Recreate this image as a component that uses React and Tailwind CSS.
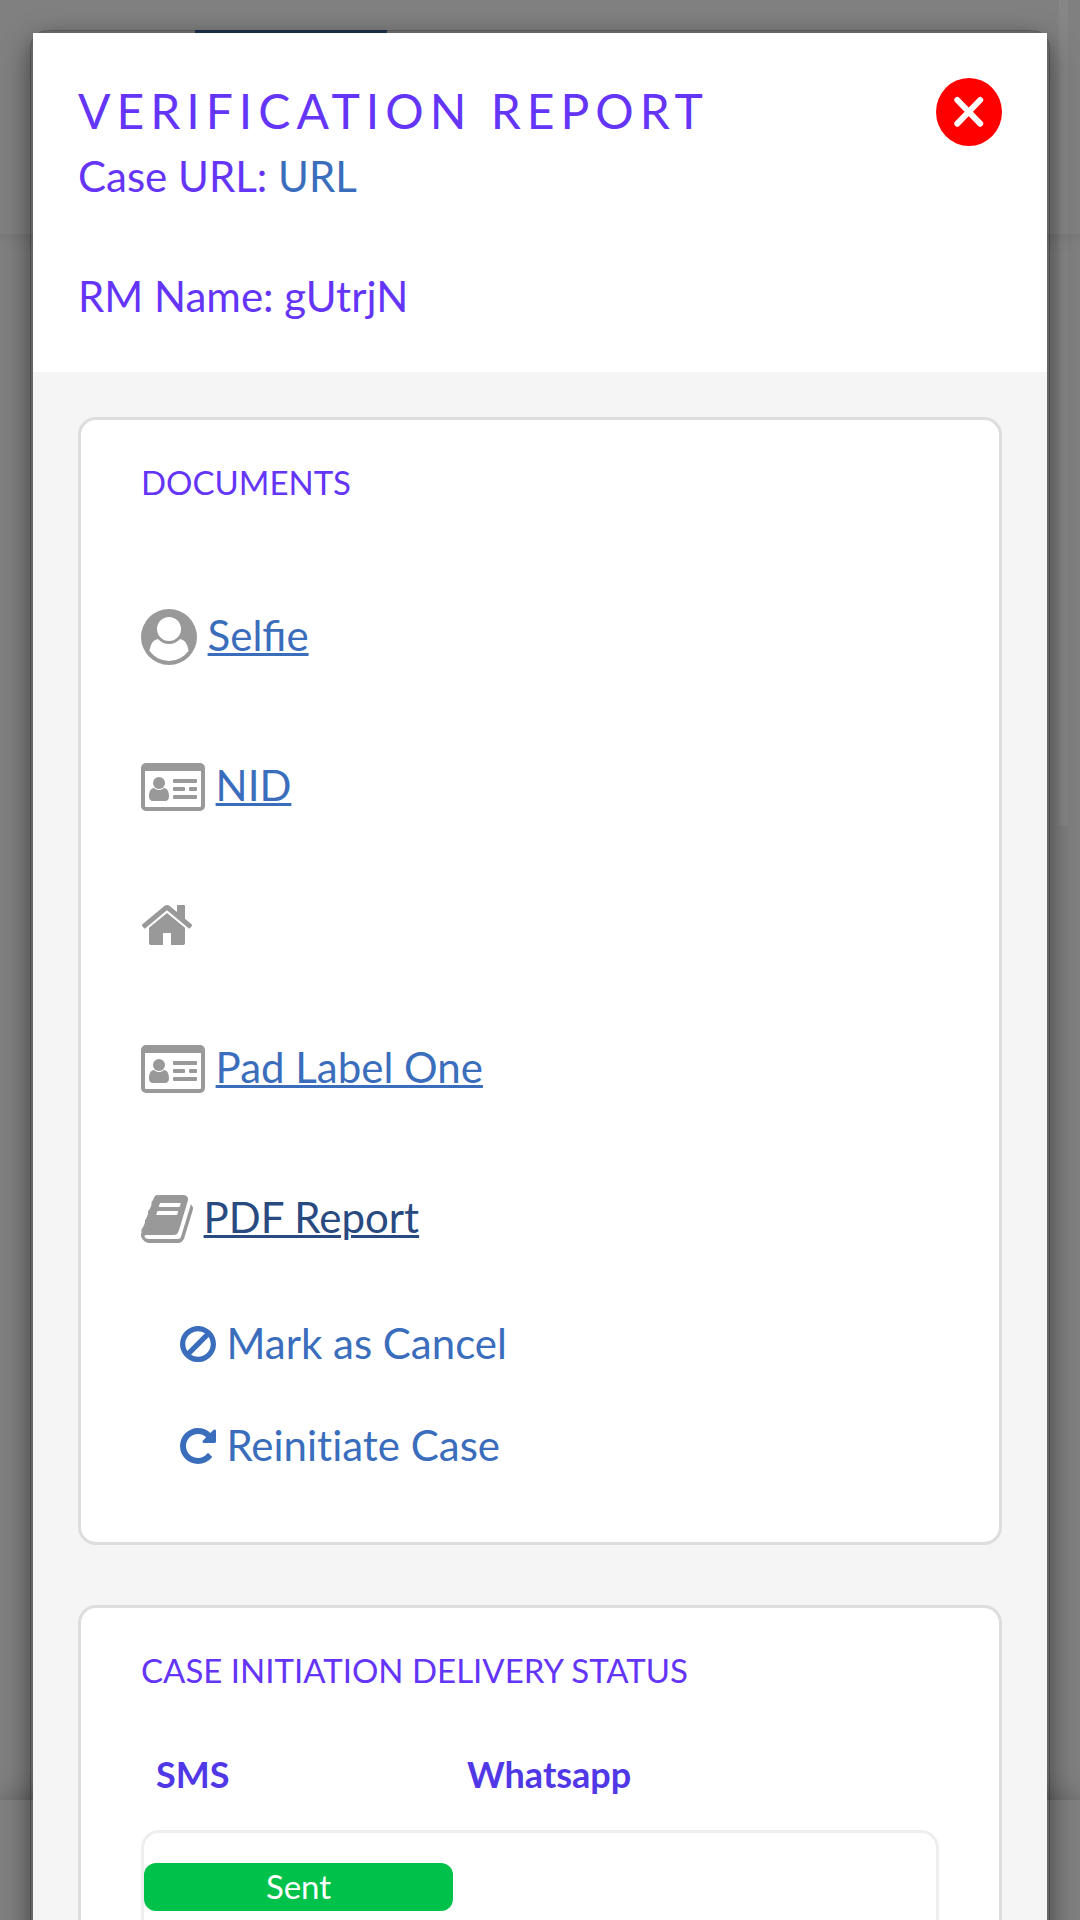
const PATHS = {
  user: "M1523 1339q-22-155-87.5-257.5t-184.5-118.5q-67 74-159.5 115.5t-195.5 41.5-195.5-41.5-159.5-115.5q-119 16-184.5 118.5t-87.5 257.5q106 150 271 237.5t356 87.5 356-87.5 271-237.5zm-243-699q0-159-112.5-271.5t-271.5-112.5-271.5 112.5-112.5 271.5 112.5 271.5 271.5 112.5 271.5-112.5 112.5-271.5zm512 256q0 182-71 347.5t-190.5 286-285.5 191.5-349 71-349-71-285.5-191.5-190.5-286-71-347.5 71-348 191-286 286-191 348-71 348 71 286 191 191 286 71 348z",
  home: "M1472 992v480q0 26-19 45t-45 19h-384v-384h-256v384h-384q-26 0-45-19t-19-45v-480q0-1 .5-3t.5-3l575-474 575 474q1 2 1 6zm223-69l-62 74q-8 9-21 11h-3q-13 0-21-7l-692-577-692 577q-12 8-24 7-13-2-21-11l-62-74q-8-10-7-23.5t11-21.5l719-599q32-26 76-26t76 26l244 204v-195q0-14 9-23t23-9h192q14 0 23 9t9 23v408l219 182q10 8 11 21.5t-7 23.5z",
  book: "M1703 478q40 57 18 129l-275 906q-19 64-76.5 107.5t-122.5 43.5h-923q-77 0-148.5-53.5t-99.5-131.5q-24-67-2-127 0-4 3-27t4-37q1-8-3-21.5t-3-19.5q2-11 8-21t16.5-23.5 16.5-23.5q23-38 45-91.5t30-91.5q3-10 .5-30t-.5-28q3-11 17-28t17-23q21-36 42-92t25-90q1-9-2.5-32t.5-28q4-13 22-30.5t22-22.5q19-26 42.5-84.5t27.5-96.5q1-8-3-25.5t-2-26.5q2-8 9-18t18-23 17-21q8-12 16.5-30.5t15-35 16-36 19.5-32 26.5-23.5 36-11.5 47.5 5.5l-1 3q38-9 51-9h761q74 0 114 56t18 130l-274 906q-36 119-71.5 153.5t-128.5 34.5h-869q-27 0-38 15-11 16-1 43 24 70 144 70h923q29 0 56-15.5t35-41.5l300-987q7-22 5-57 38 15 59 43zm-1064 2q-4 13 2 22.5t20 9.5h608q13 0 25.5-9.5t16.5-22.5l21-64q4-13-2-22.5t-20-9.5h-608q-13 0-25.5 9.5t-16.5 22.5zm-83 256q-4 13 2 22.5t20 9.5h608q13 0 25.5-9.5t16.5-22.5l21-64q4-13-2-22.5t-20-9.5h-608q-13 0-25.5 9.5t-16.5 22.5z",
  ban: "M1440 893q0-161-87-295l-754 753q137 89 297 89 111 0 211.5-43.5t173.5-116.5 116-174.5 43-212.5zm-999 299l755-754q-135-91-300-91-148 0-273 73t-198 199-73 274q0 162 89 299zm1223-299q0 157-61 300t-163.5 246-245 164-298.5 61-298.5-61-245-164-163.5-246-61-300 61-299.5 163.5-245.5 245-164 298.5-61 298.5 61 245 164 163.5 245.5 61 299.5z",
  repeat: "M1664 256v448q0 26-19 45t-45 19h-448q-42 0-59-40-17-39 14-69l138-138q-148-137-349-137-104 0-198.5 40.5t-163.5 109.5-109.5 163.5-40.5 198.5 40.5 198.5 109.5 163.5 163.5 109.5 198.5 40.5q119 0 225-52t179-147q7-10 23-12 15 0 25 9l137 138q9 8 9.5 20.5t-7.5 22.5q-109 132-264 204.5t-327 72.5q-156 0-298-61t-245-164-164-245-61-298 61-298 164-245 245-164 298-61q147 0 284.5 55.5t244.5 156.5l130-129q29-31 70-14 39 17 39 59z",
};

function Glyph({ name, viewBox, className }) {
  return (
    <svg viewBox={viewBox} className={className} fill="currentColor" aria-hidden="true">
      <path d={PATHS[name]} />
    </svg>
  );
}

function CardIcon() {
  return (
    <svg viewBox="0 0 64 48" className="mt-1 h-12 w-16 shrink-0" fill="currentColor" aria-hidden="true">
      <path
        fillRule="evenodd"
        d="M5 0H59A5 5 0 0 1 64 5V43A5 5 0 0 1 59 48H5A5 5 0 0 1 0 43V5A5 5 0 0 1 5 0ZM4 8V43A1 1 0 0 0 5 44H59A1 1 0 0 0 60 43V8Z"
      />
      <circle cx="18" cy="20" r="6" />
      <path d="M13.2 25C15.8 27.7 20.2 27.7 22.8 25C26.5 25 28 29 28 33.4C28 36.2 26.4 38 24.3 38H11.7C9.6 38 8 36.2 8 33.4C8 29 9.500 25 13.2 25Z" />
      <rect x="32" y="16" width="24" height="4" rx="1" />
      <rect x="32" y="24" width="12" height="4" rx="1" />
      <rect x="48" y="24" width="8" height="4" rx="1" />
      <rect x="32" y="32" width="24" height="4" rx="1" />
    </svg>
  );
}

function DocLink({ children, className }) {
  return (
    <a className={`ml-[10.6px] underline decoration-[3px] ${className ?? "text-[#3a6ebc]"}`}>{children}</a>
  );
}

function Backdrop() {
  return (
    <div className="absolute inset-0 flex flex-col bg-[#808080]">
      <div className="relative h-[234px] bg-[#808080] pt-[30px] shadow-[0_3px_15px_rgba(0,0,0,0.1)]">
        <div className="ml-[195px] h-[60px] w-[192px] bg-[#203b5b]" />
      </div>
      <div className="flex-1" />
      <div className="relative h-[120px] bg-[#808080] shadow-[0_0_30px_rgba(0,0,0,0.3)]" />
      <div className="absolute right-[12px] top-0 h-[825px] w-[9px] bg-white/5" />
    </div>
  );
}

export default function App() {
  return (
    <div className="relative h-[1920px] w-[1080px] overflow-hidden font-['Lato',sans-serif] text-[42px] leading-[60px] text-[#6435f6]">
      <Backdrop />
      <div className="relative mx-[30px] mt-[30px] h-[2100px] rounded-[18px] border-[3px] border-black/20 bg-white bg-clip-padding shadow-[0_9px_27px_rgba(0,0,0,0.5)]">
        <header className="flex h-[339px] items-start justify-between bg-white pl-[45px] pr-[45px] pt-[45px]">
          <div>
            <h1 className="h-[68px] text-[48px] leading-[66px] tracking-[6px]">VERIFICATION REPORT</h1>
            <p>
              Case URL: <a className="text-[#3a6ebc]">URL</a>
            </p>
            <p className="mt-[60px]">RM Name: gUtrjN</p>
          </div>
          <button className="h-[68px] w-[66px]" aria-label="Close">
            <svg viewBox="0 0 66 68" className="block h-[68px] w-[66px]">
              <ellipse cx="33" cy="34" rx="33" ry="34" fill="#ff0000" />
              <path d="M21.300 22L44.200 45.700M44.200 22L21.300 45.700" stroke="#fff" strokeWidth="6" strokeLinecap="round" />
            </svg>
          </button>
        </header>
        <main className="h-[1755px] bg-[#f5f5f5] px-[45px] pt-[45px]">
          <section className="h-[1128px] rounded-[18px] border-[3px] border-[#dddddd] bg-white px-[60px] pt-[38px]">
            <h2 className="text-[33px] leading-[48px]">DOCUMENTS</h2>
            <div className="mt-[99px] flex h-[60px] items-center text-[#999999]">
              <Glyph name="user" viewBox="0 0 1792 1792" className="mt-1 h-14 w-14 shrink-0" />
              <DocLink>Selfie</DocLink>
            </div>
            <div className="mt-[90px] flex h-[60px] items-center text-[#999999]">
              <CardIcon />
              <DocLink>NID</DocLink>
            </div>
            <div className="mt-[78px] flex h-[60px] items-center text-[#999999]">
              <Glyph name="home" viewBox="64 0 1664 1792" className="mt-1 h-14 w-[52px] shrink-0" />
            </div>
            <div className="mt-[84px] flex h-[60px] items-center text-[#999999]">
              <CardIcon />
              <DocLink>Pad Label One</DocLink>
            </div>
            <div className="mt-[90px] flex h-[60px] items-center text-[#999999]">
              <Glyph name="book" viewBox="64 128 1664 1536" className="mt-1 h-12 w-[52px] shrink-0" />
              <DocLink className="text-[#284a80]">PDF Report</DocLink>
            </div>
            <div className="ml-[39px] mt-[66px] flex h-[60px] items-center gap-[10.4px] text-[#3a6ebc]">
              <Glyph name="ban" viewBox="128 125 1536 1536" className="mt-0.5 h-9 w-9 shrink-0" />
              <span>Mark as Cancel</span>
            </div>
            <div className="ml-[39px] mt-[42px] flex h-[60px] items-center gap-[10.4px] text-[#3a6ebc]">
              <Glyph name="repeat" viewBox="128 128 1536 1536" className="mt-0.5 h-9 w-9 shrink-0" />
              <span className="[font-variant-ligatures:no-common-ligatures]">Reinitiate Case</span>
            </div>
          </section>
          <section className="mt-[60px] h-[600px] rounded-[18px] border-[3px] border-[#dddddd] bg-white px-[60px] pt-[38px]">
            <h2 className="text-[33px] leading-[48px]">CASE INITIATION DELIVERY STATUS</h2>
            <div className="mt-[53px] flex h-[54px] text-[36px] font-bold leading-[54px] text-[#5138e6]">
              <div className="w-[311px] pl-[15px]">SMS</div>
              <div className="pl-[15px]">Whatsapp</div>
            </div>
            <div className="mt-[29px] h-[300px] w-[798px] rounded-[18px] border-[3px] border-[#eeeeee] pt-[30px]">
              <div className="h-12 w-[309px] rounded-[12px] bg-[#00c24a] text-center text-[33px] leading-[46px] text-white">
                Sent
              </div>
            </div>
          </section>
        </main>
      </div>
    </div>
  );
}
